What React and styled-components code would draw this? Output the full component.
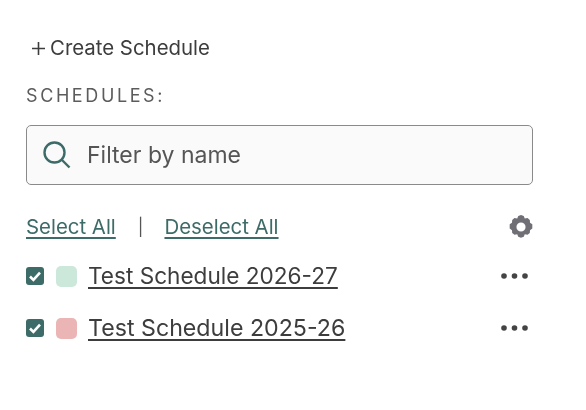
import React from "react";
import styled, { createGlobalStyle } from "styled-components";

const Global = createGlobalStyle`
  html, body { margin: 0; padding: 0; background: #fff; }
  body { font-family: Inter, "Liberation Sans", sans-serif; color: #3d3d3d; }
`;
const Page = styled.div`
  width: 507px;
  padding: 36px 0 0 26px;
  display: flex;
  flex-direction: column;
  will-change: transform;
`;
const CreateButton = styled.div`
  display: flex;
  align-items: center;
  gap: 4px;
  padding-left: 5px;
  height: 24px;
  font-size: 20.4px;
  line-height: 24px;
  color: #3d3d3d;
`;
const PlusIcon = styled.svg`
  width: 15px;
  height: 15px;
  flex: none;
`;
const Heading = styled.div`
  margin-top: 26px;
  height: 20px;
  font-size: 18px;
  line-height: 20px;
  letter-spacing: 2.6px;
  color: #5c5c5c;
`;
const SearchBox = styled.div`
  margin-top: 19px;
  height: 60px;
  box-sizing: border-box;
  border: 1px solid #8a8a8a;
  border-radius: 5px;
  background: #fafafa;
  display: flex;
  align-items: center;
  padding-left: 15px;
  gap: 15px;
  font-size: 23px;
  color: #555;
`;
const Actions = styled.div`
  margin-top: 29px;
  height: 26px;
  display: flex;
  align-items: center;
  font-size: 20.4px;
`;
const ActionLink = styled.a`
  color: #3d6b68;
  text-decoration: underline;
  text-decoration-thickness: 1.5px;
  text-underline-offset: 3px;
  line-height: 24px;
`;
const Divider = styled.span`
  margin: 0 21px 0 22px;
  font-size: 17px;
  color: #555;
`;
const Gear = styled.svg`
  margin-left: auto;
  width: 24px;
  height: 24px;
  color: #6f6f75;
`;
const Row = styled.div`
  height: 52px;
  display: flex;
  align-items: center;
`;
const List = styled.div`
  margin-top: 10px;
  display: flex;
  flex-direction: column;
`;
const Check = styled.svg`
  width: 18px;
  height: 18px;
  flex: none;
`;
const Swatch = styled.span`
  width: 21px;
  height: 21px;
  border-radius: 5px;
  margin-left: 12px;
  background: ${(p) => p.$color};
  flex: none;
`;
const Name = styled.a`
  margin-left: 11px;
  font-size: ${(p) => p.$size}px;
  line-height: 26px;
  color: #3d3d3d;
  text-decoration: underline;
  text-decoration-thickness: 1.6px;
  text-underline-offset: 3px;
`;
const More = styled.svg`
  margin-left: auto;
  margin-right: 5px;
  width: 27px;
  height: 8px;
  color: #444;
`;

const Item = ({ color, name, size }) => (
  <Row>
    <Check viewBox="0 0 18 18">
      <rect width="18" height="18" rx="3" fill="#3d6b68" />
      <path d="M4 9.5l3.4 3.4L14 5.6" fill="none" stroke="#fff" strokeWidth="2.6" />
    </Check>
    <Swatch $color={color} />
    <Name $size={size}>{name}</Name>
    <More viewBox="0 0 27 8">
      <circle cx="3" cy="4" r="2.8" fill="currentColor" />
      <circle cx="13.5" cy="4" r="2.8" fill="currentColor" />
      <circle cx="24" cy="4" r="2.8" fill="currentColor" />
    </More>
  </Row>
);

export default function App() {
  return (
    <Page>
      <Global />
      <CreateButton>
        <PlusIcon viewBox="0 0 15 15">
          <path d="M7.5 1v13M1 7.5h13" stroke="#3d3d3d" strokeWidth="1.6" fill="none" />
        </PlusIcon>
        Create Schedule
      </CreateButton>
      <Heading>SCHEDULES:</Heading>
      <SearchBox>
        <svg width="30" height="30" viewBox="0 0 30 30" fill="none" stroke="#3d6b68" strokeWidth="2.4">
          <circle cx="12.5" cy="12.5" r="10" />
          <path d="M19.5 19.5l8 8" />
        </svg>
        Filter by name
      </SearchBox>
      <Actions>
        <ActionLink>Select All</ActionLink>
        <Divider>|</Divider>
        <ActionLink>Deselect All</ActionLink>
        <Gear viewBox="1.5 1.5 21 21">
          <path
            fill="currentColor"
            fillRule="evenodd"
            d="M12 1.5l2.4.9.9 2.2 2.4-.4 2 1.6.2 2.4 2 1.5v3.6l-2 1.5-.2 2.4-2 1.6-2.4-.4-.9 2.2-2.4.9-2.4-.9-.9-2.2-2.4.4-2-1.6-.2-2.4-2-1.5v-3.6l2-1.5.2-2.4 2-1.6 2.4.4.9-2.2zM12 8a4 4 0 100 8 4 4 0 000-8z"
          />
        </Gear>
      </Actions>
      <List>
        <Item color="#cbe8da" size={22.6} name="Test Schedule 2026-27" />
        <Item color="#ebb5b5" size={23.2} name="Test Schedule 2025-26" />
      </List>
    </Page>
  );
}
